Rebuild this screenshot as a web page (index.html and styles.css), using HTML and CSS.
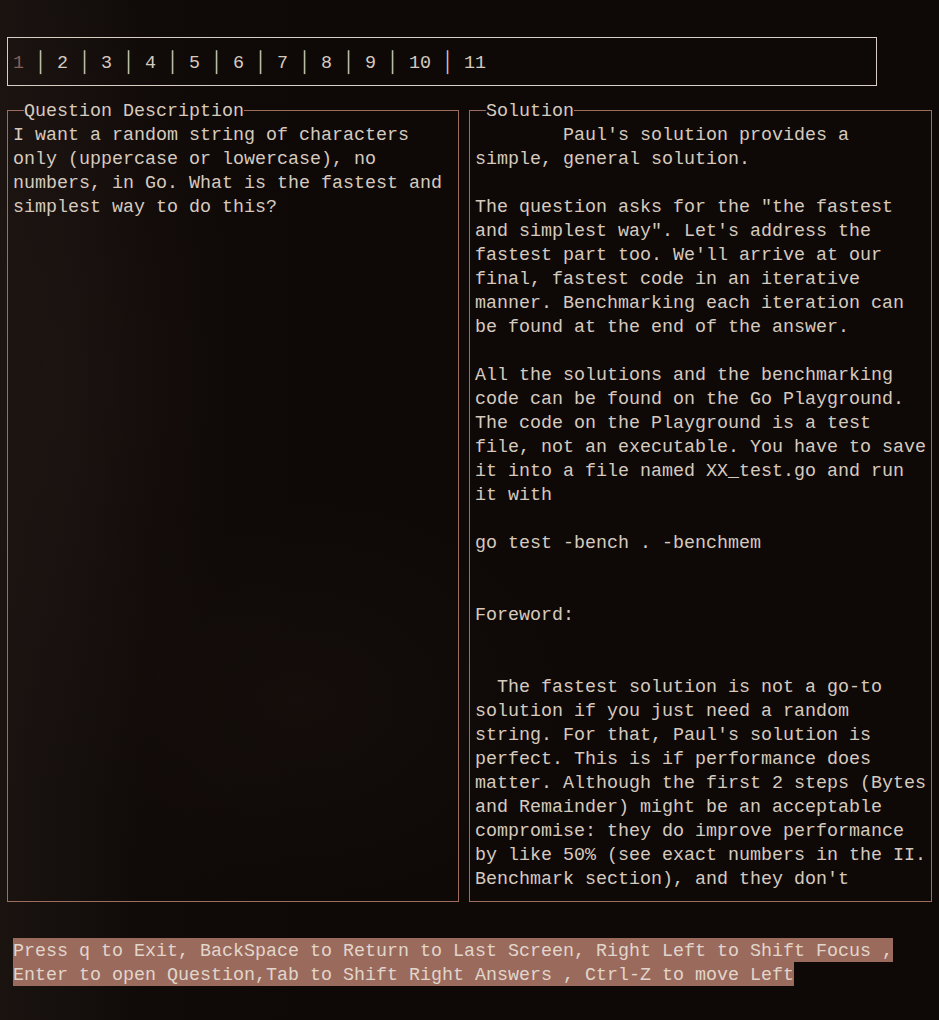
FILE: index.html
```html
<!DOCTYPE html>
<html lang="en">
<head>
<meta charset="utf-8">
<title>Question Viewer</title>
<link rel="stylesheet" href="styles.css">
</head>
<body>
<div class="screen">
  <nav class="tabs"><span class="tab active">1</span> <span class="sep">│</span> <span class="tab">2</span> <span class="sep">│</span> <span class="tab">3</span> <span class="sep">│</span> <span class="tab">4</span> <span class="sep">│</span> <span class="tab">5</span> <span class="sep">│</span> <span class="tab">6</span> <span class="sep">│</span> <span class="tab">7</span> <span class="sep">│</span> <span class="tab">8</span> <span class="sep">│</span> <span class="tab">9</span> <span class="sep">│</span> <span class="tab">10</span> <span class="sep">│</span> <span class="tab">11</span></nav>

  <div class="panes">
    <fieldset class="pane pane-question">
      <legend class="pane-title">Question Description</legend>
      <div class="pane-body">I want a random string of characters
only (uppercase or lowercase), no
numbers, in Go. What is the fastest and
simplest way to do this?</div>
    </fieldset>
    <fieldset class="pane pane-solution">
      <legend class="pane-title">Solution</legend>
      <div class="pane-body">        Paul's solution provides a
simple, general solution.

The question asks for the "the fastest
and simplest way". Let's address the
fastest part too. We'll arrive at our
final, fastest code in an iterative
manner. Benchmarking each iteration can
be found at the end of the answer.

All the solutions and the benchmarking
code can be found on the Go Playground.
The code on the Playground is a test
file, not an executable. You have to save
it into a file named XX_test.go and run
it with

go test -bench . -benchmem


Foreword:


  The fastest solution is not a go-to
solution if you just need a random
string. For that, Paul's solution is
perfect. This is if performance does
matter. Although the first 2 steps (Bytes
and Remainder) might be an acceptable
compromise: they do improve performance
by like 50% (see exact numbers in the II.
Benchmark section), and they don't</div>
    </fieldset>
  </div>

  <footer class="status">
    <div class="status-line">Press q to Exit, BackSpace to Return to Last Screen, Right Left to Shift Focus ,</div>
    <div class="status-line">Enter to open Question,Tab to Shift Right Answers , Ctrl-Z to move Left</div>
  </footer>
</div>
</body>
</html>
```

FILE: styles.css
```css
html, body {
  margin: 0;
  padding: 0;
}

body {
  width: 939px;
  height: 1020px;
  overflow: hidden;
  background:
    radial-gradient(ellipse 180px 420px at 60px 380px, rgba(36, 25, 21, 0.45), rgba(36, 25, 21, 0) 100%),
    radial-gradient(ellipse 260px 200px at 300px 700px, rgba(30, 20, 16, 0.4), rgba(30, 20, 16, 0) 100%),
    linear-gradient(90deg, #1a1310 0px, #150f0d 70px, #100a08 140px, #0e0907 300px, #0e0907 100%);
  color: #d6cabf;
  font-family: "Liberation Mono", "DejaVu Sans Mono", monospace;
  font-size: 18.333px;
  line-height: 24px;
}

.screen {
  padding: 37px 0 0 7px;
}

.tabs {
  display: block;
  box-sizing: border-box;
  width: 870px;
  height: 49px;
  border: 1px solid #d9cec4;
  padding: 14px 5px 9px;
  line-height: 24px;
  white-space: pre;
}

.tab {
  color: #d6cabf;
}

.tab.active {
  color: #83605a;
}

.sep {
  display: inline-block;
  color: #d6cabf;
  transform: translateY(-1px) scaleY(1.15);
}

.panes {
  display: flex;
  gap: 10px;
  margin-top: 12px;
}

.pane {
  margin: 0;
  padding: 0 5px 9px;
  border: 1px solid #9e6d5c;
  min-width: 0;
  box-sizing: border-box;
}

.pane-question {
  width: 452px;
}

.pane-solution {
  width: 463px;
}

.pane-title {
  box-sizing: border-box;
  height: 24px;
  padding: 2px 0 0;
  margin-left: 11px;
  line-height: 24px;
  color: #d6cabf;
}

.pane-body {
  padding-top: 2px;
  white-space: pre;
  overflow: hidden;
}

.status {
  margin-top: 36px;
  margin-left: 6px;
}

.status-line {
  box-sizing: border-box;
  height: 24px;
  padding-top: 2px;
  width: max-content;
  white-space: pre;
  background: #9a6a5c;
  color: #e2d6cc;
}
```
